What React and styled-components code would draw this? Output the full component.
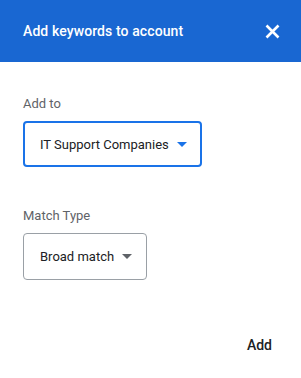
import React from "react";
import styled, { createGlobalStyle } from "styled-components";

const GlobalStyle = createGlobalStyle`
  html, body {
    margin: 0;
    padding: 0;
    background: #ffffff;
    font-family: Roboto, "Noto Sans", Arial, sans-serif;
  }
`;

const Dialog = styled.div`
  width: 301px;
  height: 378px;
  display: flex;
  flex-direction: column;
  background: #ffffff;
  box-sizing: border-box;
`;

const Header = styled.div`
  height: 62px;
  flex-shrink: 0;
  display: flex;
  align-items: center;
  justify-content: space-between;
  padding: 0 21px 0 23px;
  background: #1967d2;
  color: #ffffff;
`;

const Title = styled.div`
  font-size: 14px;
  font-weight: 500;
  letter-spacing: 0.1px;
`;

const CloseButton = styled.button`
  border: 0;
  background: none;
  padding: 0;
  width: 16px;
  height: 16px;
  display: flex;
  align-items: center;
  justify-content: center;
  cursor: pointer;
`;

const Body = styled.div`
  flex: 1;
  display: flex;
  flex-direction: column;
  padding: 34px 23px 0;
`;

const Field = styled.div`
  display: flex;
  flex-direction: column;
  align-items: flex-start;
  gap: 9px;
  margin-bottom: ${p => p.$spacing || 0}px;
`;

const Label = styled.div`
  font-size: 13px;
  color: #5f6368;
  line-height: 16px;
`;

const Select = styled.div`
  display: flex;
  align-items: center;
  gap: 8px;
  box-sizing: border-box;
  height: ${p => (p.$focused ? 46 : 47)}px;
  padding: ${p => (p.$focused ? "0 13px 0 15px" : "0 14px 0 16px")};
  border: ${p => (p.$focused ? "2px solid #1a73e8" : "1px solid #9aa0a6")};
  border-radius: 4px;
  font-size: 13px;
  color: #202124;
`;

const Caret = ({ color }) => (
  <svg width="10" height="5" viewBox="0 0 10 5">
    <path d="M0 0 L10 0 L5 5 Z" fill={color} />
  </svg>
);

const Footer = styled.div`
  display: flex;
  justify-content: flex-end;
  padding: 0 21px 21px;
`;

const TextButton = styled.button`
  border: 0;
  background: none;
  font-family: inherit;
  font-size: 14px;
  font-weight: 500;
  color: #202124;
  padding: 4px 8px;
  cursor: pointer;
`;

export default function App() {
  return (
    <>
      <GlobalStyle />
      <Dialog>
        <Header>
          <Title>Add keywords to account</Title>
          <CloseButton aria-label="Close">
            <svg width="15" height="15" viewBox="0 0 15 15">
              <path d="M1.5 1.5 L13.5 13.5 M13.5 1.5 L1.5 13.5" stroke="#ffffff" strokeWidth="2.6" strokeLinecap="butt" />
            </svg>
          </CloseButton>
        </Header>
        <Body>
          <Field $spacing={41}>
            <Label>Add to</Label>
            <Select $focused>
              IT Support Companies
              <Caret color="#1a73e8" />
            </Select>
          </Field>
          <Field>
            <Label>Match Type</Label>
            <Select>
              Broad match
              <Caret color="#5f6368" />
            </Select>
          </Field>
        </Body>
        <Footer>
          <TextButton>Add</TextButton>
        </Footer>
      </Dialog>
    </>
  );
}
